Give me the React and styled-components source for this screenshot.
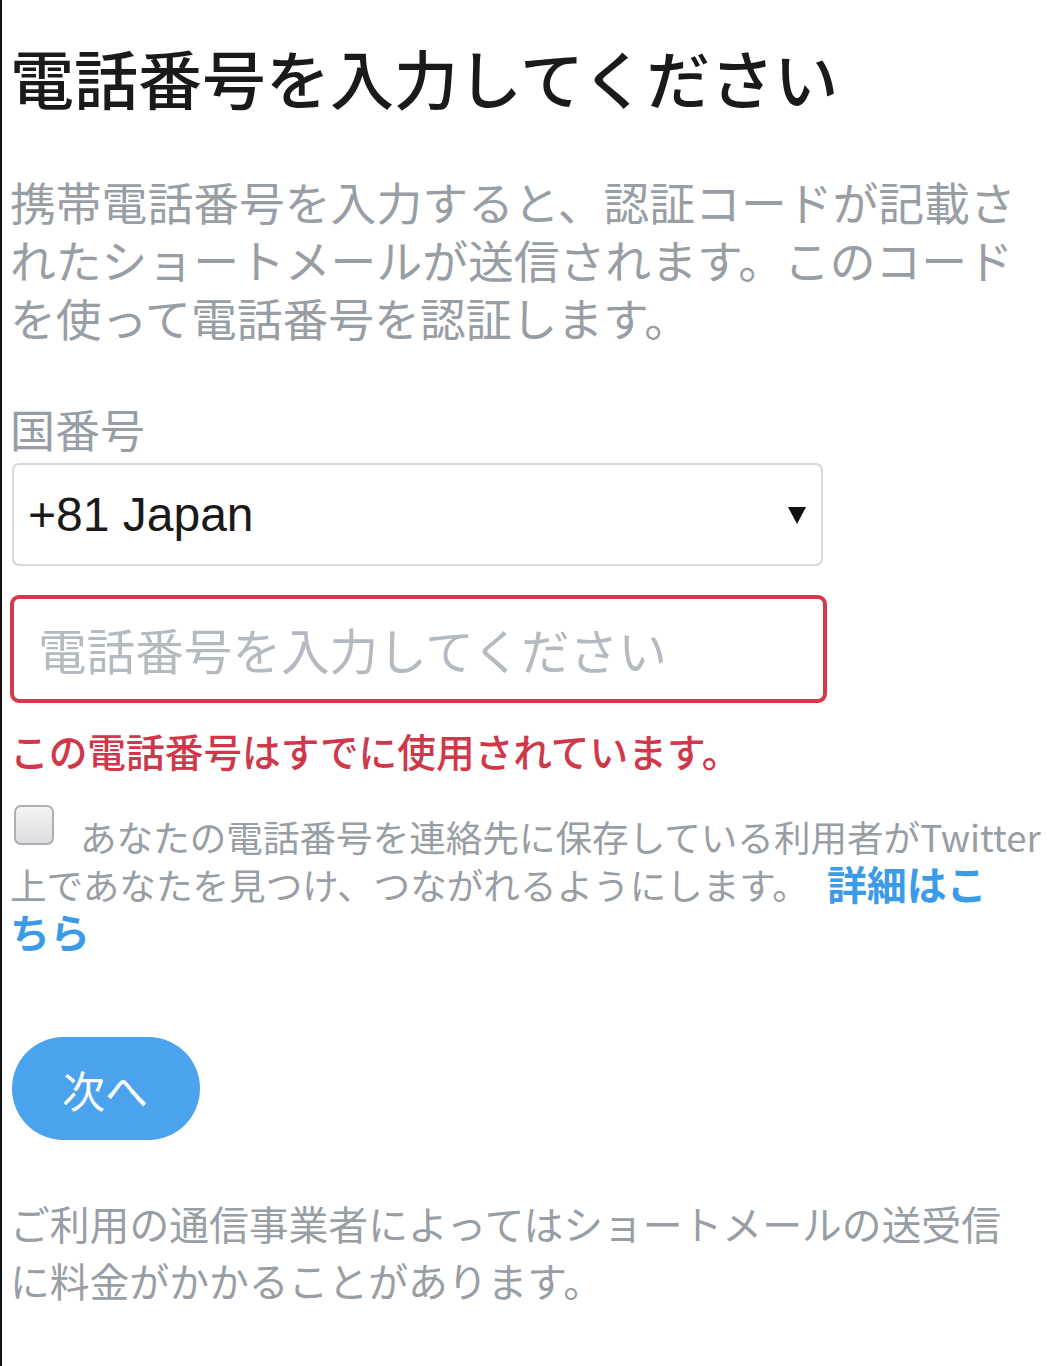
import React from 'react';
import styled, { createGlobalStyle } from 'styled-components';

const GlobalStyle = createGlobalStyle`
body {
  margin: 0;
  background: #fff;
  font-family: "Noto Sans CJK JP", "Noto Sans", sans-serif;
}
`;

const Page = styled.div`
min-height: 1366px;
box-sizing: border-box;
border-left: 2px solid #111;
padding: 38px 16px 0 8px;
`;

const Title = styled.h1`
margin: 0;
font-size: 64px;
line-height: 77px;
font-weight: 500;
color: #1a1a1a;
white-space: nowrap;
`;

const Lead = styled.p`
margin: 57px 0 0 0;
font-size: 45.8px;
line-height: 58px;
color: #989ea4;
white-space: nowrap;
`;

const Label = styled.div`
margin: 56px 0 0 0;
font-size: 45px;
line-height: 54px;
color: #989ea4;
`;

const SelectBox = styled.div`
margin: 7px 0 0 2px;
width: 811px;
height: 103px;
box-sizing: border-box;
border: 2px solid #d6d9dc;
border-radius: 7px;
display: flex;
align-items: center;
justify-content: space-between;
padding: 0 14px 0 14px;
`;

const SelectValue = styled.span`
font-family: "Liberation Sans", "Noto Sans", sans-serif;
font-size: 48px;
color: #1a1a1a;
`;

const PhoneInput = styled.input`
display: block;
margin: 29px 0 0 0;
width: 817px;
height: 108px;
box-sizing: border-box;
border: 4px solid ${({ $error }) => ($error ? '#d33a4c' : '#d6d9dc')};
border-radius: 9px;
padding: 0 24px;
font-family: "Noto Sans CJK JP", sans-serif;
font-size: 48.6px;
outline: none;
&::placeholder {
  color: #b4babf;
}
`;

const ErrorText = styled.div`
margin: 22px 0 0 0;
font-size: 38.7px;
line-height: 50px;
font-weight: 500;
color: #d0384a;
white-space: nowrap;
`;

const Consent = styled.p`
margin: 30px 0 0 0;
font-size: 36.6px;
line-height: 47px;
color: #989ea4;
white-space: nowrap;
`;

const Check = styled.span`
display: inline-block;
width: 40px;
height: 40px;
box-sizing: border-box;
margin: 0 26px 0 4px;
vertical-align: 7px;
border: 2px solid #acb0b4;
border-radius: 7px;
background: linear-gradient(#f4f4f5, #dcdde0);
`;

const Link = styled.a`
color: #3c9be8;
font-size: 40px;
font-weight: 700;
margin-left: 18px;
text-decoration: none;
`;

const NextButton = styled.button`
display: block;
margin: 81px 0 0 2px;
width: 188px;
height: 103px;
border: none;
border-radius: 52px;
background: #4ba3ee;
color: #fff;
font-family: "Noto Sans CJK JP", sans-serif;
font-size: 43px;
text-align: left;
padding: 0 0 0 50px;
`;

const Note = styled.p`
margin: 54px 0 0 0;
font-size: 39.8px;
line-height: 57px;
color: #989ea4;
white-space: nowrap;
`;

const Arrow = () => (
    <svg width="20" height="20" viewBox="0 0 20 20">
        <path d="M1 2 L19 2 L10 19 Z" fill="#111" />
    </svg>
);

const App = () => {
    return (
        <>
            <GlobalStyle />
            <Page>
                <Title>電話番号を入力してください</Title>
                <Lead>
                    携帯電話番号を入力すると、認証コードが記載さ<br />
                    れたショートメールが送信されます。このコード<br />
                    を使って電話番号を認証します。
                </Lead>
                <Label>国番号</Label>
                <SelectBox>
                    <SelectValue>+81 Japan</SelectValue>
                    <Arrow />
                </SelectBox>
                <PhoneInput $error placeholder="電話番号を入力してください" />
                <ErrorText>この電話番号はすでに使用されています。</ErrorText>
                <Consent>
                    <Check />
                    あなたの電話番号を連絡先に保存している利用者がTwitter<br />
                    上であなたを見つけ、つながれるようにします。
                    <Link href="#">詳細はこ<br />ちら</Link>
                </Consent>
                <NextButton>次へ</NextButton>
                <Note>
                    ご利用の通信事業者によってはショートメールの送受信<br />
                    に料金がかかることがあります。
                </Note>
            </Page>
        </>
    );
};

export default App;
